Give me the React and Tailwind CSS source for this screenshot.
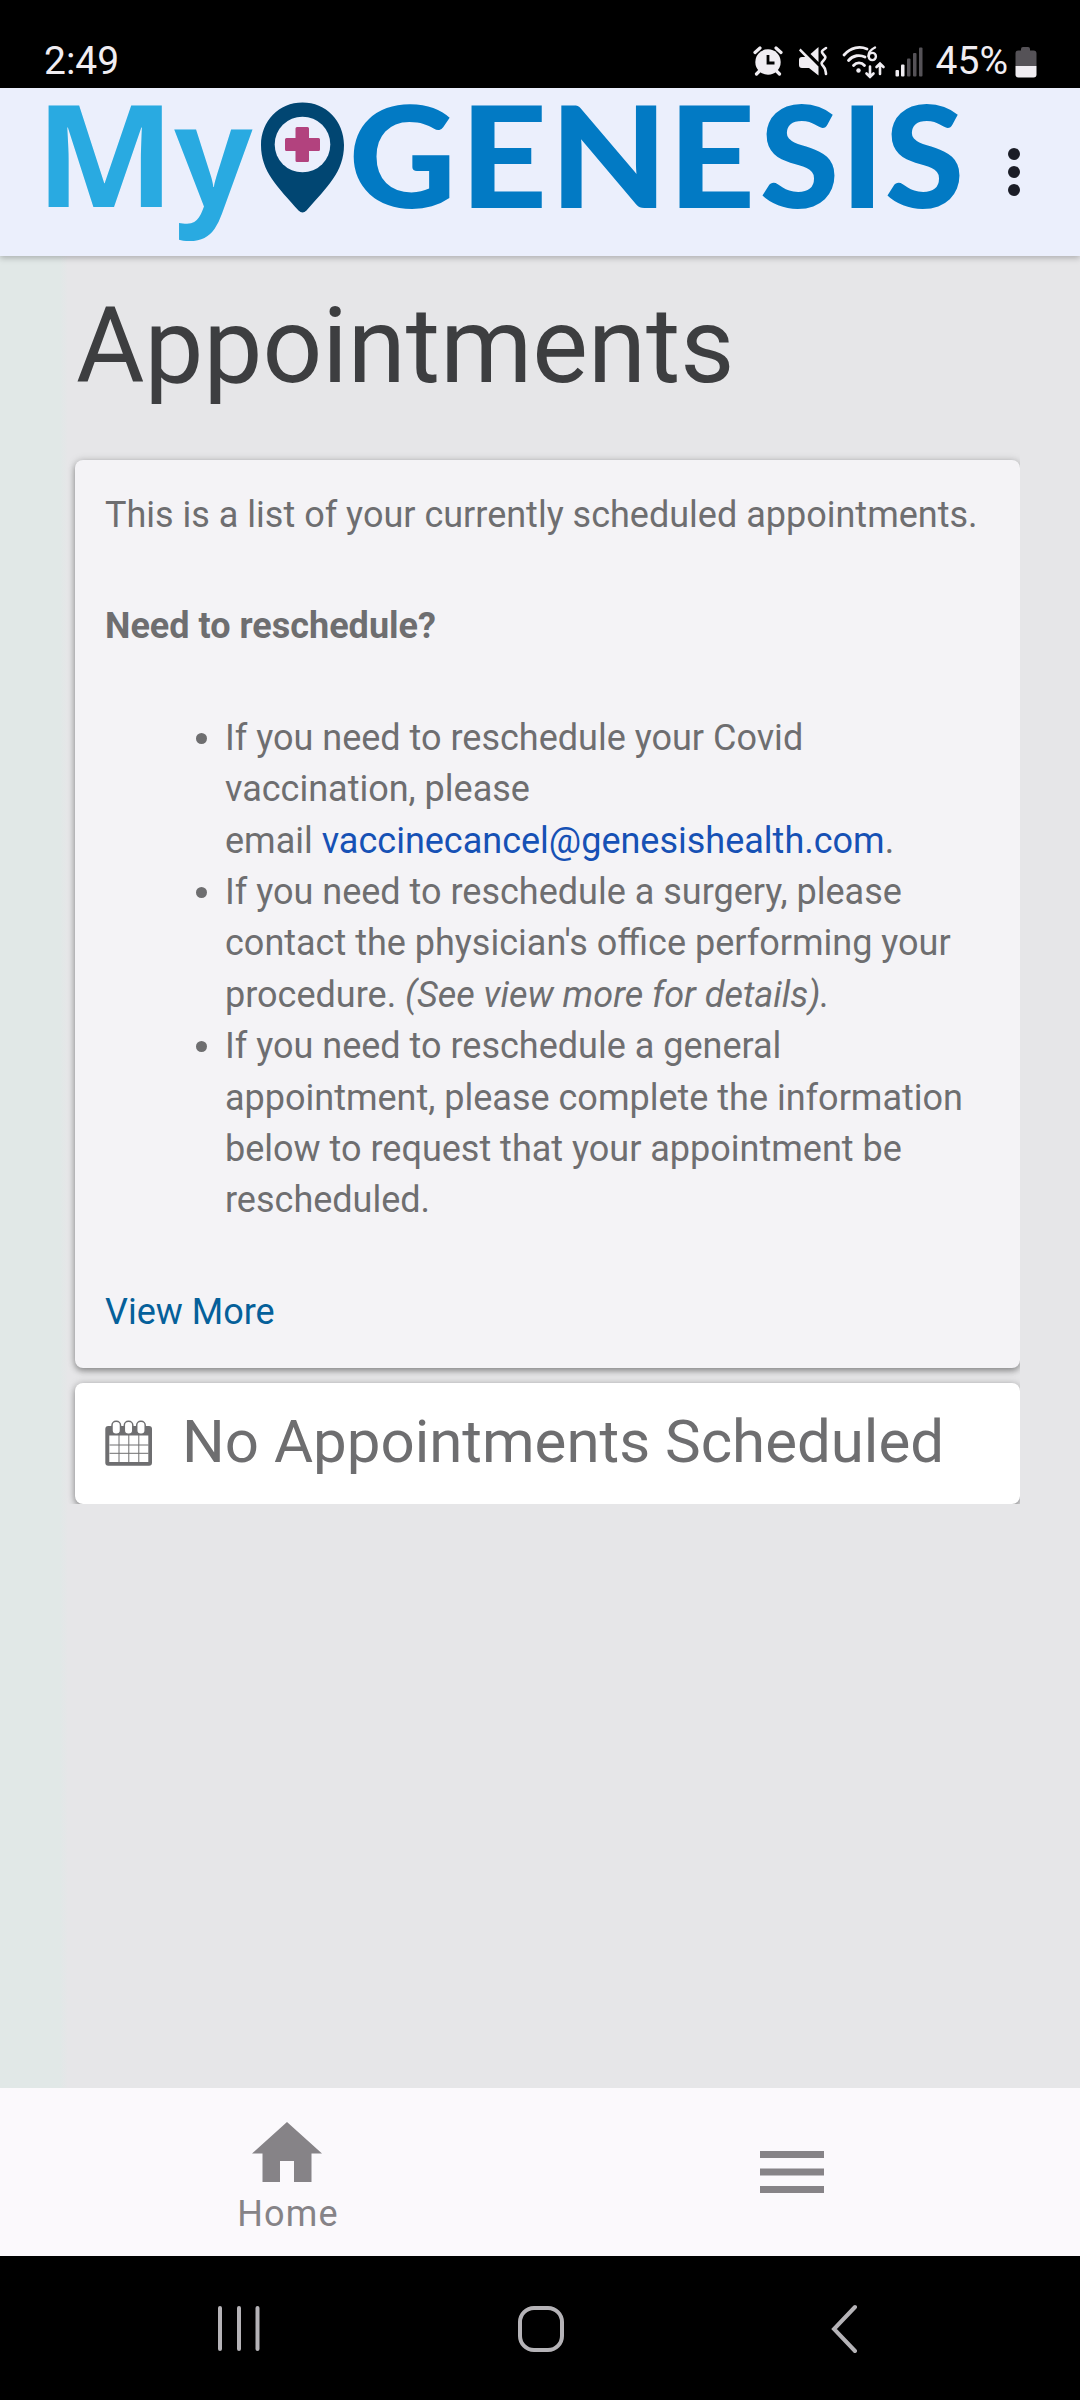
import { useState } from "react";

const RESCHEDULE_EMAIL = "vaccinecancel@genesishealth.com";

// letter, x offset, horizontal stretch
const GENESIS_LETTERS = [
  ["G", 348.8, 1.045],
  ["E", 460, 1.07],
  ["N", 549.8, 1.075],
  ["E", 668, 1.07],
  ["S", 759.7, 1.015],
  ["I", 840.8, 1],
  ["S", 884.7, 1.015],
];

function AlarmIcon() {
  return (
    <svg width="30" height="30" viewBox="0 0 30 30" className="text-[#f0edf2]">
      <circle cx="15" cy="16" r="12.7" fill="currentColor" />
      <path d="M2 6.5 7 2M28 6.5 23 2" stroke="currentColor" strokeWidth="3.2" strokeLinecap="round" />
      <path d="M6.5 25 3.5 28M23.5 25l3 3" stroke="currentColor" strokeWidth="3.2" strokeLinecap="round" />
      <path d="M15 9v8h6.5" fill="none" stroke="#000" strokeWidth="2.8" />
    </svg>
  );
}

function MuteVibrateIcon() {
  return (
    <svg width="30" height="30" viewBox="0 0 30 30" className="text-[#f0edf2]">
      <path d="M2.500 2.500 20.500 20.500V29.500L11 22H4q-3 0-3-3v-5q0-3 3-3h3.200L1 4.500z" fill="currentColor" />
      <path d="M20.500 1v15L12.500 8z" fill="currentColor" />
      <path
        d="M28 2c-5 3-5 4-2.500 6.500s2.500 3.500 0 6-2.500 3.500 0 6 2 4.500 2.500 7.500"
        fill="none"
        stroke="currentColor"
        strokeWidth="2.6"
        strokeLinecap="round"
      />
    </svg>
  );
}

function WifiIcon() {
  return (
    <svg width="46" height="36" viewBox="0 0 46 36" className="text-[#f0edf2]">
      <g fill="none" stroke="currentColor" strokeWidth="2.8" strokeLinecap="round">
        <path d="M3 10C10 2 19 1 26 4" />
        <path d="M7.500 15.500C12 10 19 9.500 24 12" />
        <path d="M12.500 20.500c3-3.500 8-3.500 11 0" />
        <path d="M34 2.500c-4 2-6.500 5-6.500 8.500" strokeWidth="2.4" />
        <circle cx="31.3" cy="11.5" r="3.6" strokeWidth="2.4" />
        <path d="M29 21.500v10.500M25.500 28.500 29 32l3.500-3.500M39 29V18.500M35.500 22 39 18.500l3.500 3.500" strokeWidth="2.6" />
      </g>
      <circle cx="17.5" cy="25.5" r="2.2" fill="currentColor" />
    </svg>
  );
}

function SignalIcon() {
  return (
    <svg width="28" height="32" viewBox="0 0 28 32">
      <g fill="#f0edf2">
        <rect x="0.5" y="24" width="3.5" height="6.5" rx="1" />
        <rect x="6" y="18.5" width="3.5" height="12" rx="1" />
      </g>
      <g fill="#555257">
        <rect x="12" y="12.5" width="3.5" height="18" rx="1" />
        <rect x="18" y="7" width="3.5" height="23.5" rx="1" />
        <rect x="24" y="1.5" width="3.5" height="29" rx="1" />
      </g>
    </svg>
  );
}

function BatteryIcon() {
  return (
    <svg width="22" height="32" viewBox="0 0 22 32">
      <path d="M6 3q0-2 2-2h5q2 0 2 2v1.500h3.500q3 0 3 3V20H0.500V7.500q0-3 3-3H6z" fill="#555257" />
      <path d="M0.500 20h21v8.500q0 3-3 3h-15q-3 0-3-3z" fill="#f0edf2" />
    </svg>
  );
}

function Logo() {
  return (
    <svg width="975" height="168" viewBox="0 0 975 168" className="block">
      <g fontSize="142" fontWeight="700" fill="#29aae1" fontFamily="'Noto Sans', sans-serif">
        <text transform="translate(35.2 118.7) scale(1.045 1)">M</text>
        <text transform="translate(174.2 118.7) scale(0.965 1)">y</text>
      </g>
      <path
        d="M302.500 14.500C279 14.500 261 33 261 57c0 27 17 42 37.500 65.500q4 4 8 0C327 99 344 84 344 57c0-24-18-42.500-41.500-42.500z"
        fill="#014672"
      />
      <circle cx="302.5" cy="56.5" r="27.8" fill="#ebeffc" />
      <path
        d="M297 39h10.500q1.500 0 1.500 1.500V50h9.500q1.500 0 1.500 1.500v10q0 1.500-1.500 1.500H309v9.500q0 1.500-1.500 1.500H297q-1.500 0-1.500-1.500V63H286.500q-1.500 0-1.500-1.500v-10q0-1.500 1.500-1.500h9V40.500q0-1.500 1.500-1.500z"
        fill="#b2427e"
      />
      <g fontSize="142" fontWeight="900" fill="#027ac4" fontFamily="Lato, sans-serif">
        {GENESIS_LETTERS.map(([letter, x, stretch], i) => (
          <text key={i} transform={`translate(${x} 120) scale(${stretch} 1)`}>
            {letter}
          </text>
        ))}
      </g>
    </svg>
  );
}

function CalendarIcon() {
  return (
    <svg width="48" height="48" viewBox="0 0 48 48" className="shrink-0">
      <rect x="0.3" y="6" width="46.7" height="39.7" rx="3" fill="#6e6e70" />
      <rect x="4.3" y="15.5" width="39" height="26.5" fill="#fff" />
      <path d="M14 15v27M23.800 15v27M33.800 15v27M4.500 25h39M4.500 33.300h39" stroke="#6e6e70" strokeWidth="1" />
      <g fill="#fff" stroke="#6e6e70" strokeWidth="1.5">
        <rect x="7" y="1.3" width="8.5" height="13" rx="4" />
        <rect x="19.3" y="1.3" width="8.5" height="13" rx="4" />
        <rect x="31.7" y="1.3" width="8.5" height="13" rx="4" />
      </g>
    </svg>
  );
}

export default function App() {
  const [expanded, setExpanded] = useState(false);

  return (
    <div className="w-[1080px] h-[2400px] flex flex-col overflow-hidden bg-black font-['Roboto',sans-serif]">
      {/* STATUS BAR */}
      <div className="h-[88px] shrink-0 pl-[44px] pr-[43px] pt-[38px] flex items-start justify-between text-[#f0edf2] text-[39px] leading-[46px]">
        <span>2:49</span>
        <div className="flex items-start">
          <div className="pt-2 mr-[15px]"><AlarmIcon /></div>
          <div className="pt-2 mr-[13px]"><MuteVibrateIcon /></div>
          <div className="pt-[7px] mr-[8px]"><WifiIcon /></div>
          <div className="pt-2 mr-[13px]"><SignalIcon /></div>
          <span className="mr-[7px]">45%</span>
          <div className="pt-2"><BatteryIcon /></div>
        </div>
      </div>

      {/* HEADER */}
      <header className="h-[168px] shrink-0 relative z-10 flex items-center justify-between bg-[#ebeffc] pr-[60px] shadow-[0_2px_6px_rgba(0,0,0,0.25)]">
        <Logo />
        <button className="flex flex-col gap-[6px]" aria-label="More options">
          <span className="size-[12px] rounded-full bg-[#1b1d27]" />
          <span className="size-[12px] rounded-full bg-[#1b1d27]" />
          <span className="size-[12px] rounded-full bg-[#1b1d27]" />
        </button>
      </header>

      {/* CONTENT */}
      <main className="flex-1 min-h-0 pl-[62px] bg-[linear-gradient(to_right,#e1e8e7_60px,#e6e6e8_68px)]">
        <h1 className="pt-[28px] pl-[14px] h-[191px] text-[105px] leading-[126px] text-[#3d3e40]">Appointments</h1>

        <div className="w-[958px] h-[1057px] pt-[13px] pl-[13px] overflow-hidden">
          <section className="h-[908px] px-[30px] pt-[30px] rounded-[8px] bg-[#f4f3f6] text-[#6e6e70] text-[36px] leading-[51.4px] shadow-[0_3px_6px_rgba(0,0,0,0.35),0_0_8px_rgba(0,0,0,0.15)]">
            <p className="whitespace-nowrap">This is a list of your currently scheduled appointments.</p>
            <p className="mt-[60px] font-bold">Need to reschedule?</p>
            <ul className="mt-[60px] pl-[120px] list-disc">
              <li>
                If you need to reschedule your Covid
                <br />
                vaccination, please
                <br />
                email <a href={`mailto:${RESCHEDULE_EMAIL}`} className="text-[#1651b5]">{RESCHEDULE_EMAIL}</a>.
              </li>
              <li>
                If you need to reschedule a surgery, please
                <br />
                contact the physician's office performing your
                <br />
                procedure. <em>(See view more for details).</em>
              </li>
              <li>
                If you need to reschedule a general
                <br />
                appointment, please complete the information
                <br />
                below to request that your appointment be
                <br />
                rescheduled.
              </li>
            </ul>
            <button onClick={() => setExpanded(!expanded)} className="mt-[60px] block text-[#05609a]">
              {expanded ? "View Less" : "View More"}
            </button>
          </section>

          <section className="mt-[15px] h-[121px] px-[30px] flex items-center gap-[29px] rounded-[8px] bg-white shadow-[0_3px_6px_rgba(0,0,0,0.35),0_0_8px_rgba(0,0,0,0.15)]">
            <CalendarIcon />
            <h2 className="pb-[3px] text-[60px] leading-[80px] text-[#6e6e70] whitespace-nowrap">No Appointments Scheduled</h2>
          </section>
        </div>
      </main>

      {/* BOTTOM NAV */}
      <nav className="h-[168px] shrink-0 flex bg-[#fbf9fc] text-[#868387]">
        <button className="w-[574px] pt-[34px] flex flex-col items-center">
          <svg width="70" height="60" viewBox="0 0 70 60" fill="currentColor">
            <path d="M35 0 70 31.500H59.500V60H42V39H28v21H10.500V31.500H0z" />
          </svg>
          <span className="mt-[10px] pl-[2px] text-[36px] leading-[44px] tracking-[1.2px]">Home</span>
        </button>
        <button className="w-[436px] flex items-center justify-center" aria-label="Menu">
          <svg width="64" height="42" viewBox="0 0 64 42" fill="currentColor">
            <path d="M0 0h64v7H0zM0 17.500h64v7H0zM0 35h64v7H0z" />
          </svg>
        </button>
      </nav>

      {/* ANDROID NAV */}
      <div className="h-[144px] shrink-0 pl-[217px] flex items-center">
        <svg width="44" height="48" viewBox="0 0 44 48" stroke="#b5b3b7" strokeWidth="4" strokeLinecap="round">
          <path d="M3 4v41M22 4v41M40.500 4v41" />
        </svg>
        <svg width="48" height="48" viewBox="0 0 48 48" fill="none" stroke="#b5b3b7" strokeWidth="4" className="ml-[256px]">
          <rect x="3" y="4" width="42" height="42" rx="14" />
        </svg>
        <svg width="32" height="50" viewBox="0 0 32 50" fill="none" stroke="#b5b3b7" strokeWidth="4" strokeLinecap="round" className="ml-[265px]">
          <path d="M25 4 4 26l21 22" />
        </svg>
      </div>
    </div>
  );
}
